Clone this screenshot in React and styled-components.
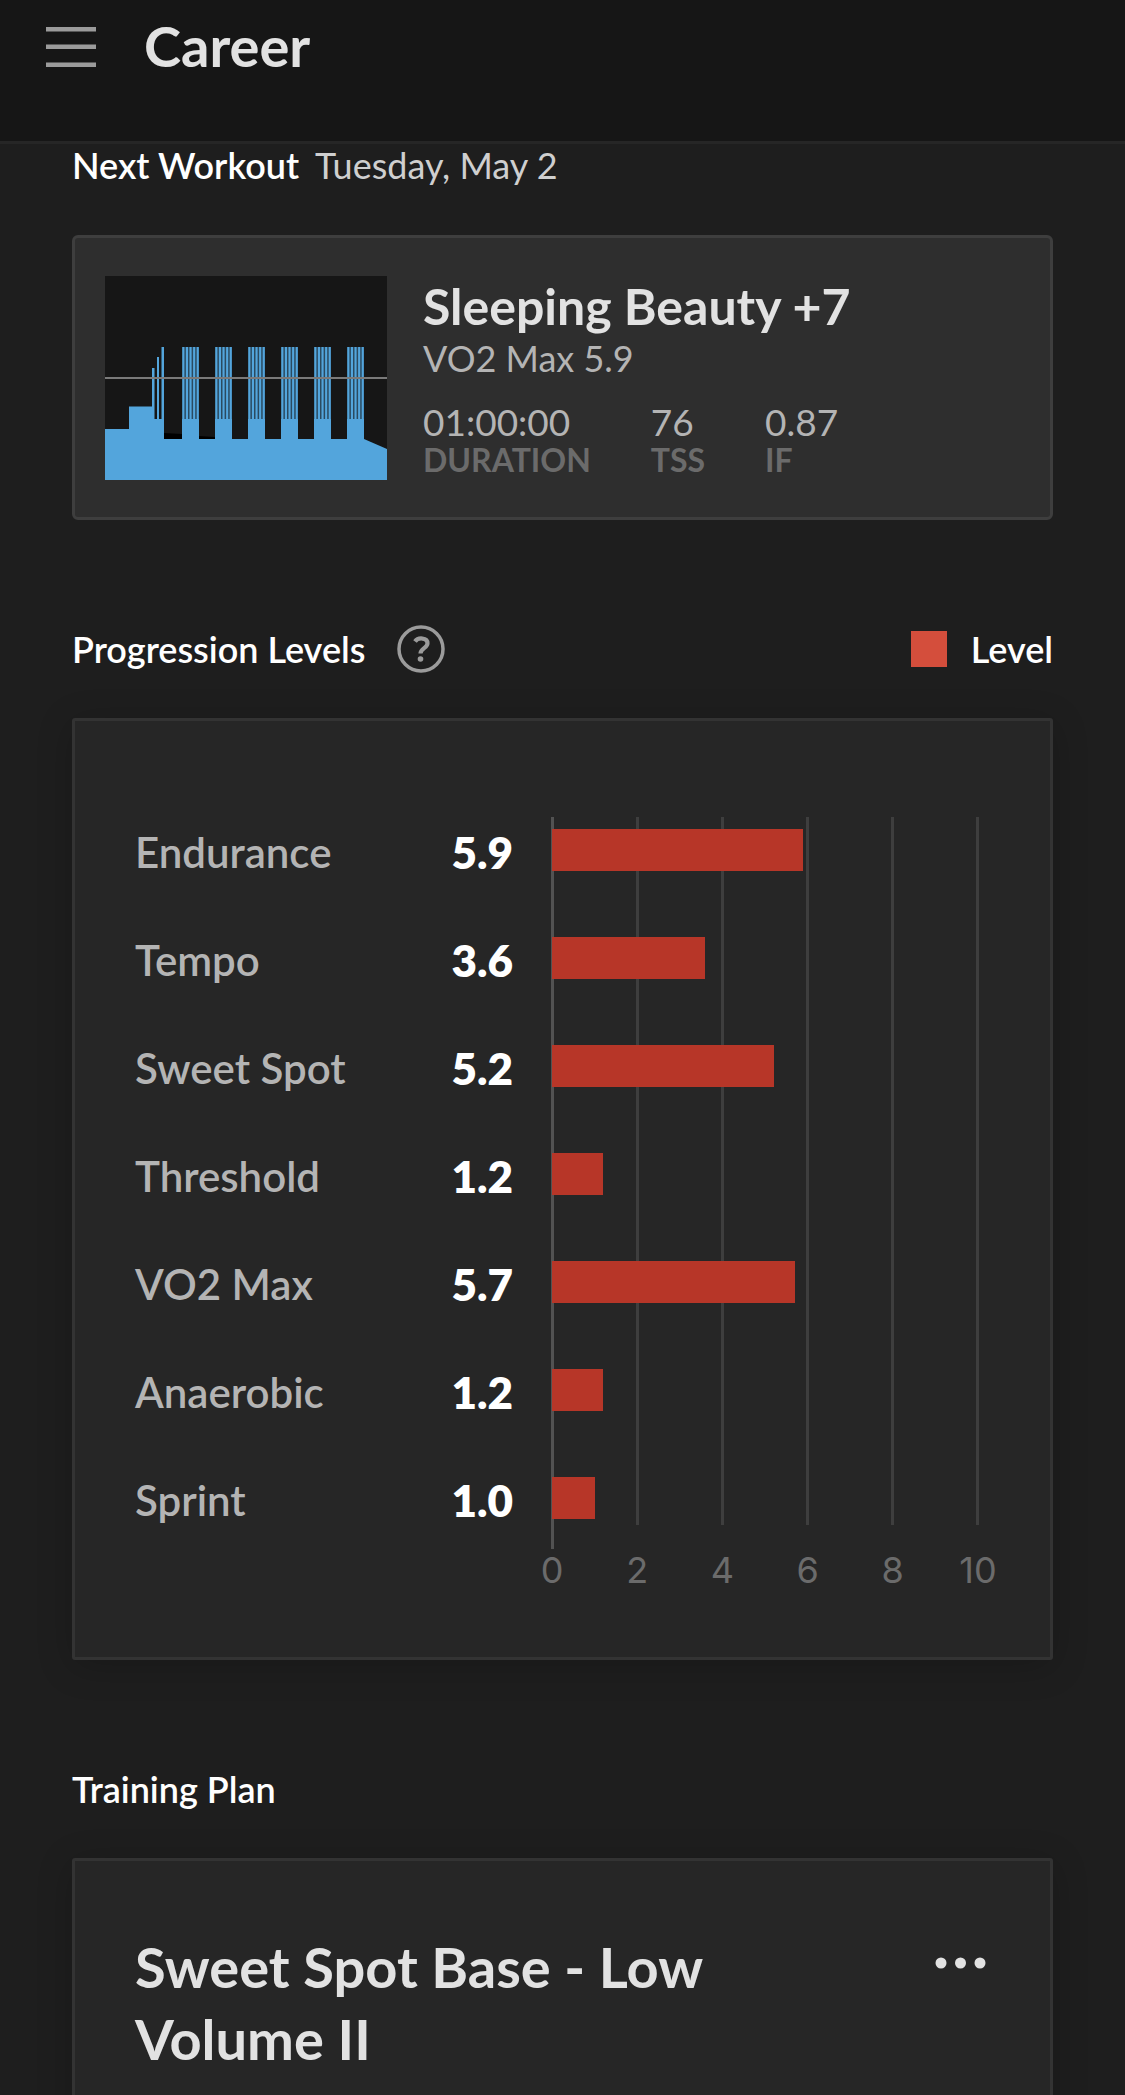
import React from "react";
import styled, { createGlobalStyle } from "styled-components";

const GlobalStyle = createGlobalStyle`
  body {
    margin: 0;
    background: #1e1e1e;
    color: #fff;
    font-family: Lato, "Open Sans", sans-serif;
  }
  * {
    box-sizing: border-box;
  }
`;

const Header = styled.header`
  display: flex;
  align-items: flex-start;
  gap: 48px;
  height: 144px;
  padding: 12px 46px 0;
  background: #161616;
  border-bottom: 3px solid #262626;
`;

const IconButton = styled.button`
  display: flex;
  flex-shrink: 0;
  padding: 0;
  border: 0;
  background: none;
  color: ${(props) => props.$color || "#9b9b9b"};
  cursor: pointer;
`;

const MenuButton = styled(IconButton)`
  padding-top: 15px;
`;

const PageTitle = styled.h1`
  margin: 0;
  font-size: 56px;
  line-height: 68px;
  font-weight: 700;
  color: #e2e2e2;
`;

const Main = styled.main`
  padding: 0 72px;
  overflow: hidden;
`;

const SectionHead = styled.div`
  display: flex;
  align-items: center;
  gap: ${(props) => (props.$compact ? "16px" : "32px")};
  height: ${(props) => (props.$compact ? "42px" : "48px")};
`;

const Section = styled.section`
  margin-bottom: 105px;
`;

const SectionTitle = styled.h2`
  margin: 0;
  font-size: 36px;
  line-height: 46px;
  font-weight: 600;
`;

const WorkoutDate = styled.span`
  font-size: 36px;
  line-height: 46px;
  color: #cfcfcf;
`;

const Legend = styled.div`
  display: flex;
  align-items: center;
  gap: 24px;
  margin-left: auto;
  font-size: 36px;
  line-height: 46px;
  font-weight: 600;
`;

const Swatch = styled.span`
  width: 36px;
  height: 36px;
  background: #d44e3c;
`;

const WorkoutCard = styled.a`
  display: flex;
  align-items: center;
  gap: 36px;
  margin-top: 49px;
  padding: 38px 30px 37px;
  background: #2e2e2e;
  border: 3px solid #3e3e3e;
  border-radius: 6px;
  color: #b4b4b4;
  text-decoration: none;
`;

const Profile = styled.svg`
  flex-shrink: 0;
  width: 282px;
  height: 204px;
  background: #161616;
`;

const WorkoutName = styled.h3`
  margin: 0;
  font-size: 50px;
  line-height: 56px;
  font-weight: 700;
  color: #e2e2e2;
`;

const WorkoutZone = styled.p`
  margin: 0 0 20px;
  font-size: 36px;
  line-height: 48px;
`;

const Stats = styled.dl`
  display: flex;
  gap: 60px;
  margin: 0;
`;

const Stat = styled.div`
  display: flex;
  flex-direction: column-reverse;

  dt {
    font-size: 32px;
    line-height: 36px;
    font-weight: 700;
    color: #6b6b6b;
  }

  dd {
    margin: 0;
    font-size: 37px;
    line-height: 40px;
  }
`;

const Card = styled.div`
  margin-top: 45px;
  background: #262626;
  border: 3px solid #333;
  border-radius: 3px;
  box-shadow: 0 6px 36px rgba(0, 0, 0, 0.2);
`;

const LevelsCard = styled(Card)`
  padding: 75px 72px 69px 60px;
`;

const LevelsChart = styled.div`
  display: grid;
  grid-template-columns: 417px 1fr;
`;

const GridLines = styled.div`
  grid-area: 1 / 2;
  display: flex;
  justify-content: space-between;
  margin: 21px -1px 3px;
`;

const GridLine = styled.span`
  width: 3px;
  margin-bottom: ${(props) => (props.$axis ? "0" : "24px")};
  background: ${(props) => (props.$axis ? "#525252" : "#3e3e3e")};
`;

const Levels = styled.ul`
  grid-area: 1 / 1 / 2 / 3;
  margin: 0;
  padding: 0;
  list-style: none;
`;

const LevelRow = styled.li`
  display: grid;
  grid-template-columns: 378px 1fr;
  column-gap: 39px;
  align-items: center;
  height: 108px;
  font-size: 42px;
  line-height: 48px;
`;

const LevelLabel = styled.div`
  display: flex;
  justify-content: space-between;
  padding-top: 3px;
  font-weight: 600;
  color: #b4b4b4;

  strong {
    font-size: 44px;
    font-weight: 800;
    color: #fff;
  }
`;

const LevelBar = styled.div`
  height: 42px;
  background: #b73628;
`;

const Ticks = styled.div`
  grid-column: 2;
  display: flex;
  justify-content: space-between;
  margin: 0 -24px;
  font-family: Inter, sans-serif;
  font-size: 36px;
  line-height: 36px;
  color: #6b6b6b;

  span {
    width: 48px;
    text-align: center;
  }
`;

const PlanCard = styled(Card)`
  display: flex;
  align-items: flex-start;
  justify-content: space-between;
  gap: 48px;
  padding: 70px 64px 72px 60px;
`;

const PlanName = styled.h3`
  max-width: 620px;
  margin: 0;
  font-size: 56px;
  line-height: 72px;
  font-weight: 700;
  color: #e2e2e2;
`;

const MoreButton = styled(IconButton)`
  padding-top: 26px;
`;

const levels = [
  { name: "Endurance", value: 5.9 },
  { name: "Tempo", value: 3.6 },
  { name: "Sweet Spot", value: 5.2 },
  { name: "Threshold", value: 1.2 },
  { name: "VO2 Max", value: 5.7 },
  { name: "Anaerobic", value: 1.2 },
  { name: "Sprint", value: 1.0 },
];

const ticks = [0, 2, 4, 6, 8, 10];

const intervalSets = [77, 110, 143, 176, 209, 242];

function WorkoutProfile() {
  return (
    <Profile viewBox="0 0 282 204" aria-hidden="true">
      <path d="M59 157l18 1v5H59zM94 160l16 1v2H94z" fill="#000" />
      <path
        d="M0 204V153H24V130.500H47V92H49.500V143H52V81H54V143H56.500V71H59V163H259L282 173V204Z"
        fill="#53a5dc"
      />
      {intervalSets.map((x) => (
        <g key={x} fill="#53a5dc">
          <rect x={x} y="71" width="17" height="73" fill="#2a4a60" />
          <rect x={x} y="143" width="17" height="21" />
          {[0, 1, 2, 3, 4].map((i) => (
            <rect key={i} x={x + 0.3 + i * 3.6} y="71" width="2.100" height="73" />
          ))}
        </g>
      ))}
      <rect y="101" width="282" height="2" fill="#7a7a7a" />
    </Profile>
  );
}

function App() {
  return (
    <>
      <GlobalStyle />
      <Header>
        <MenuButton type="button" aria-label="Menu">
          <svg width="50" height="40" viewBox="0 0 50 40" fill="currentColor">
            <path d="M0 0H50V4.500H0zM0 17.500H50V22H0zM0 35.500H50V40H0z" />
          </svg>
        </MenuButton>
        <PageTitle>Career</PageTitle>
      </Header>
      <Main>
        <Section>
          <SectionHead $compact>
            <SectionTitle>Next Workout</SectionTitle>
            <WorkoutDate>Tuesday, May 2</WorkoutDate>
          </SectionHead>
          <WorkoutCard href="#workout">
            <WorkoutProfile />
            <div>
              <WorkoutName>Sleeping Beauty +7</WorkoutName>
              <WorkoutZone>VO2 Max 5.9</WorkoutZone>
              <Stats>
                <Stat>
                  <dt>DURATION</dt>
                  <dd>01:00:00</dd>
                </Stat>
                <Stat>
                  <dt>TSS</dt>
                  <dd>76</dd>
                </Stat>
                <Stat>
                  <dt>IF</dt>
                  <dd>0.87</dd>
                </Stat>
              </Stats>
            </div>
          </WorkoutCard>
        </Section>

        <Section>
          <SectionHead>
            <SectionTitle>Progression Levels</SectionTitle>
            <IconButton type="button" aria-label="About progression levels">
              <svg width="48" height="48" viewBox="0 0 48 48" fill="none" stroke="currentColor">
                <circle cx="24" cy="24" r="22" strokeWidth="3.500" />
                <path d="M18 16.500c3-4.500 12.500-4 12.500 1.800 0 4.700-7 5-7 10.200" strokeWidth="4.200" />
                <circle cx="23.500" cy="34" r="2.800" fill="currentColor" stroke="none" />
              </svg>
            </IconButton>
            <Legend>
              <Swatch />
              Level
            </Legend>
          </SectionHead>
          <LevelsCard>
            <LevelsChart>
              <GridLines>
                {ticks.map((tick) => (
                  <GridLine key={tick} $axis={tick === 0} />
                ))}
              </GridLines>
              <Levels>
                {levels.map(({ name, value }) => (
                  <LevelRow key={name}>
                    <LevelLabel>
                      <span>{name}</span>
                      <strong>{value.toFixed(1)}</strong>
                    </LevelLabel>
                    <LevelBar style={{ width: `${value * 10}%` }} />
                  </LevelRow>
                ))}
              </Levels>
              <Ticks>
                {ticks.map((tick) => (
                  <span key={tick}>{tick}</span>
                ))}
              </Ticks>
            </LevelsChart>
          </LevelsCard>
        </Section>

        <section>
          <SectionHead>
            <SectionTitle>Training Plan</SectionTitle>
          </SectionHead>
          <PlanCard>
            <PlanName>Sweet Spot Base - Low Volume II</PlanName>
            <MoreButton type="button" aria-label="Plan options" $color="#e2e2e2">
              <svg width="51" height="12" viewBox="0 0 51 12" fill="currentColor">
                <circle cx="6" cy="6" r="5.500" />
                <circle cx="25.500" cy="6" r="5.500" />
                <circle cx="45" cy="6" r="5.500" />
              </svg>
            </MoreButton>
          </PlanCard>
        </section>
      </Main>
    </>
  );
}

export default App;
